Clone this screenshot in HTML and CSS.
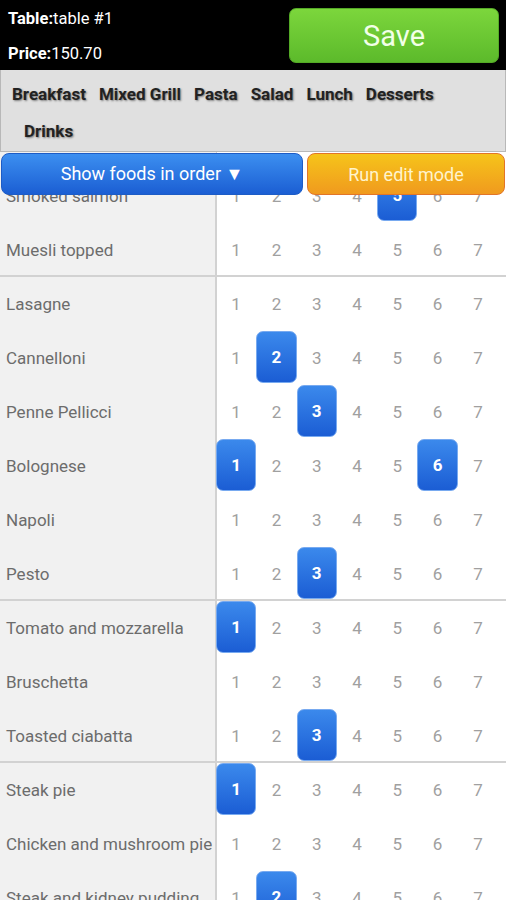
FILE: index.html
```html
<!DOCTYPE html>
<html lang="en">
<head>
    <meta charset="UTF-8">
    <meta name="viewport" content="width=device-width, initial-scale=1.0">
    <title>Order</title>
    <link rel="stylesheet" href="styles.css">
</head>
<body>
    <header class="top">
        <div class="info">
            <span><b>Table:</b>table #1</span>
            <span><b>Price:</b>150.70</span>
        </div>
        <button type="button" class="save">Save</button>
    </header>
    <nav class="cats">
        <span>Breakfast</span>
        <span>Mixed Grill</span>
        <span>Pasta</span>
        <span>Salad</span>
        <span>Lunch</span>
        <span>Desserts</span>
        <span class="next-line">Drinks</span>
    </nav>
    <main class="board">
        <div class="actions">
            <button type="button" class="btn-blue">Show foods in order &#9660;</button>
            <button type="button" class="btn-orange">Run edit mode</button>
        </div>
        <div id="list" class="list"></div>
    </main>
    <script>
        const groups = [
            [['Smoked salmon', [5]], ['Muesli topped', []]],
            [['Lasagne', []], ['Cannelloni', [2]], ['Penne Pellicci', [3]], ['Bolognese', [1, 6]], ['Napoli', []], ['Pesto', [3]]],
            [['Tomato and mozzarella', [1]], ['Bruschetta', []], ['Toasted ciabatta', [3]]],
            [['Steak pie', [1]], ['Chicken and mushroom pie', []], ['Steak and kidney pudding', [2]]]
        ]

        const list = document.getElementById('list')
        groups.forEach((group) => {
            const box = document.createElement('div')
            box.className = 'group'
            group.forEach(([name, picked]) => {
                const row = document.createElement('div')
                row.className = 'row'
                const label = document.createElement('span')
                label.className = 'name'
                label.textContent = name
                row.append(label)
                for (let i = 1; i <= 7; i++) {
                    const cell = document.createElement('span')
                    cell.className = picked.includes(i) ? 'num on' : 'num'
                    cell.textContent = i
                    row.append(cell)
                }
                box.append(row)
            })
            list.append(box)
        })
    </script>
</body>
</html>
```

FILE: styles.css
```css
body {
    margin: 0;
    width: 506px;
    height: 900px;
    overflow: hidden;
    font-family: Roboto, "Liberation Sans", sans-serif;
    background-color: white;
}
.top {
    display: flex;
    justify-content: space-between;
    align-items: center;
    height: 70px;
    background-color: black;
    padding: 0 7px 0 8px;
    box-sizing: border-box;
}
.info {
    display: flex;
    flex-direction: column;
    gap: 16px;
    color: white;
    font-size: 16.5px;
    padding-top: 1px;
}
.save {
    width: 210px;
    height: 55px;
    margin-top: 1px;
    border: 1px solid #54aa26;
    border-radius: 7px;
    background: linear-gradient(#7cd63c, #5cba2b);
    color: #f2ffe8;
    font-family: inherit;
    font-size: 29px;
}
.cats {
    display: flex;
    flex-wrap: wrap;
    align-content: flex-start;
    column-gap: 13px;
    row-gap: 17px;
    height: 82px;
    box-sizing: border-box;
    padding: 14px 40px 0 11px;
    background-color: #e0e0e0;
    border: 1px solid #b8b8b8;
    border-top: none;
}
.cats>span {
    font-size: 17px;
    font-weight: bold;
    color: #222;
    line-height: 20px;
    text-shadow: 1px 1px 2px rgba(0, 0, 0, 0.45);
}
.cats>span.next-line {
    margin-left: 12px;
}
.board {
    position: relative;
    height: 748px;
    overflow: hidden;
    background: linear-gradient(to right, #f1f1f1 216px, #d2d2d2 216px, #d2d2d2 217px, white 217px);
}
.actions {
    position: absolute;
    top: 1px;
    left: 1px;
    right: 1px;
    display: flex;
    gap: 4px;
    z-index: 2;
}
.actions>button {
    height: 42px;
    border-radius: 8px;
    font-family: inherit;
    font-size: 18px;
}
.btn-blue {
    width: 302px;
    border: 1px solid #1d5cc6;
    background: linear-gradient(#3c8ff0, #1b5ed3);
    color: white;
}
.btn-orange {
    flex: 1;
    border: 1px solid #e27528;
    background: linear-gradient(#f6c41a, #f09a1e);
    color: #fff4cc;
}
.list {
    padding-top: 17px;
}
.row {
    display: flex;
    height: 54px;
}
.group>.row:last-child {
    box-shadow: inset 0 -2px #d2d2d2;
}
.name {
    width: 216px;
    flex: none;
    box-sizing: border-box;
    padding-left: 6px;
    display: flex;
    align-items: center;
    border-right: 1px solid #d2d2d2;
    font-size: 17px;
    color: #6c6c6c;
    white-space: nowrap;
    overflow: hidden;
}
.num {
    width: 40.3px;
    flex: none;
    display: flex;
    justify-content: center;
    align-items: center;
    font-size: 17px;
    color: #a0a0a0;
}
.num.on {
    height: 52px;
    box-sizing: border-box;
    border: 1px solid #78aaf0;
    border-radius: 7px;
    background: linear-gradient(#3b89ec, #1b5dd4);
    color: white;
    font-weight: bold;
}
```
